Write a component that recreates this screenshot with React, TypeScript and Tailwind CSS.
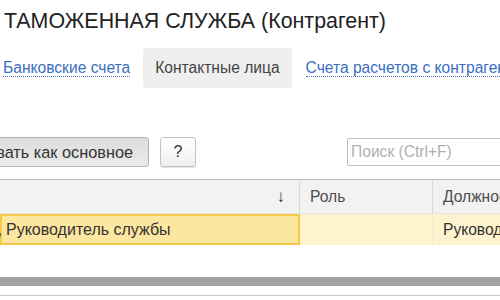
import React from "react";

export default function App() {
  return (
    <div className="w-[500px] h-[300px] overflow-hidden bg-white text-[#333] font-['Liberation_Sans',Arial,sans-serif]">
      {/* Title */}
      <div className="h-[44px] pl-[4px] pt-[8px]">
        <h1 className="text-[21.4px] leading-[26px] whitespace-nowrap text-[#222]">ТАМОЖЕННАЯ СЛУЖБА (Контрагент)</h1>
      </div>

      {/* Tabs */}
      <div className="h-[40px] mt-[4px] flex items-center whitespace-nowrap text-[15.6px]">
        <a className="ml-[3px] text-[#3a6fc0] border-b border-dotted border-[#3a6fc0] leading-[17px]">Банковские счета</a>
        <div className="ml-[13px] h-[40px] px-[12px] flex items-center bg-[#efefef] rounded-[2px] text-[#444]">Контактные лица</div>
        <a className="ml-[14px] text-[#3a6fc0] border-b border-dotted border-[#3a6fc0] leading-[17px]">Счета расчетов с контрагентом</a>
      </div>

      {/* Toolbar */}
      <div className="mt-[49px] h-[30px] flex items-center whitespace-nowrap text-[15.6px]">
        <div className="w-[149px] h-[30px] flex justify-end shrink-0">
          <button className="shrink-0 h-[30px] pl-[16px] pr-[15px] bg-gradient-to-b from-[#dcdcdc] to-[#ebebeb] border border-[#b3b3b3] rounded-[3px] text-[16.3px] text-[#333]">
            Использовать как основное
          </button>
        </div>
        <button className="ml-[11px] w-[36px] h-[30px] shrink-0 bg-gradient-to-b from-white to-[#f0f0f0] border border-[#c2c2c2] rounded-[3px] shadow-[0_1px_1px_rgba(0,0,0,0.12)] text-[16px] text-[#333]">
          ?
        </button>
        <div className="ml-[151px] h-[28px] w-[200px] shrink-0 border border-[#bdbdbd] rounded-[2px] flex items-center pl-[3px] text-[#b0b0b0]">
          Поиск (Ctrl+F)
        </div>
      </div>

      {/* Table */}
      <div className="mt-[12px] border-t border-[#bdbdbd] w-[580px] text-[15.6px] whitespace-nowrap">
        <div className="h-[34px] flex bg-[#f2f2f2] border-b border-[#e4e4e4] text-[#4d4d4d]">
          <div className="w-[300px] shrink-0 border-r border-[#d9d9d9] flex items-center justify-end pr-[14px] text-[17px] text-[#333]">↓</div>
          <div className="w-[133px] shrink-0 border-r border-[#d9d9d9] flex items-center pl-[10px]">Роль</div>
          <div className="flex-1 flex items-center pl-[10px]">Должность</div>
        </div>
        <div className="h-[31px] flex bg-[#fdf3cf] text-[#333]">
          <div className="w-[300px] shrink-0 bg-[#fde6a0] border-2 border-[#f4c94a] flex items-center text-[16px]">
            <span className="w-0 flex justify-end">Петров А. В.,</span>
            <span className="ml-[4px]">Руководитель службы</span>
          </div>
          <div className="w-[133px] shrink-0 border-r border-[#f5ebc8]"></div>
          <div className="flex-1 flex items-center pl-[10px]">Руководитель</div>
        </div>
      </div>

      {/* Scroll bar and bottom line */}
      <div className="mt-[32px] h-[9px] bg-[#a3a3a3]"></div>
      <div className="mt-[9px] h-[1px] bg-[#c8c8c8]"></div>
    </div>
  );
}
